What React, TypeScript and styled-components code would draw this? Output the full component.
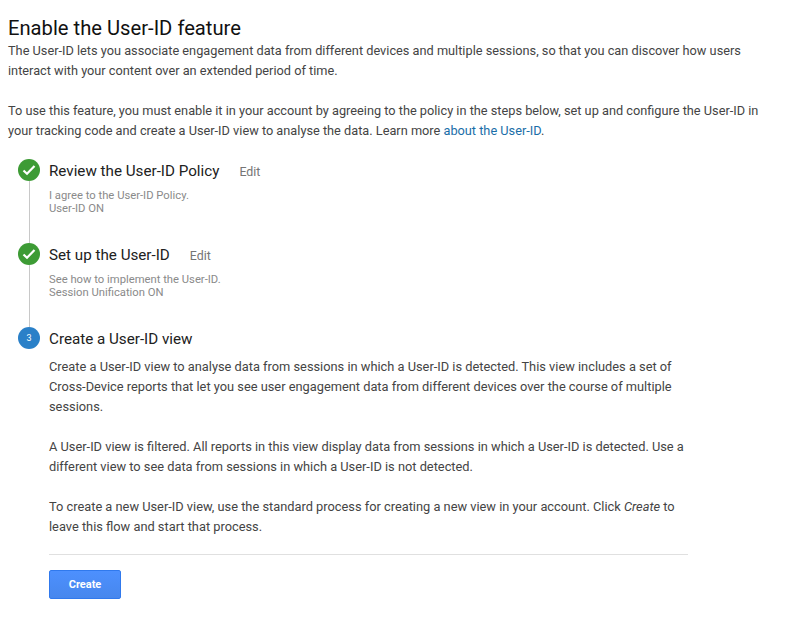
import * as React from "react";
import styled, { createGlobalStyle } from "styled-components";

const GlobalStyle = createGlobalStyle`
  html, body {
    margin: 0;
    padding: 0;
    background: #fff;
    font-family: Roboto, "Liberation Sans", sans-serif;
  }
`;

const Page = styled.div`
  width: 790px;
  height: 629px;
  box-sizing: border-box;
  padding: 15px 8px 0;
  overflow: hidden;
`;

const Title = styled.h1`
  margin: 0;
  font-size: 20.2px;
  line-height: 26px;
  font-weight: 400;
  color: #111;
`;

const Paragraph = styled.p`
  margin: 0 0 20px;
  font-size: 12.76px;
  line-height: 20px;
  color: #444;
`;

const Link = styled.a`
  color: #1a6ea8;
  text-decoration: none;
`;

const Steps = styled.div`
  display: flex;
  flex-direction: column;
  margin-top: -2px;
  padding-left: 10px;
`;

const Step = styled.div<{ $height?: number }>`
  display: flex;
  gap: 9px;
  height: ${(p) => (p.$height ? `${p.$height}px` : "auto")};
`;

const Rail = styled.div`
  display: flex;
  flex-direction: column;
  align-items: center;
  width: 22px;
  flex: none;
`;

const RailLine = styled.div`
  flex: 1;
  width: 1px;
  background: #c8c8c8;
`;

const Badge = styled.div<{ $color: string }>`
  width: 22px;
  height: 22px;
  flex: none;
  border-radius: 50%;
  background: ${(p) => p.$color};
  color: #fff;
  font-size: 9px;
  display: flex;
  align-items: center;
  justify-content: center;
`;

const StepBody = styled.div`
  flex: 1;
  min-width: 0;
`;

const StepHeader = styled.div`
  display: flex;
  align-items: center;
  gap: 20px;
  height: 24px;
`;

const StepTitle = styled.div`
  font-size: 15.2px;
  color: #212121;
`;

const EditLink = styled.span`
  font-size: 12.4px;
  color: #757575;
`;

const Summary = styled.div`
  margin-top: 6px;
  font-size: 11.25px;
  line-height: 13px;
  color: #8a8a8a;
`;

const Description = styled.div`
  width: 639px;
  margin-top: 6px;

  ${Paragraph} {
    font-size: 12.82px;
  }
`;

const Divider = styled.div`
  height: 1px;
  margin-top: -3px;
  background: #e0e0e0;
`;

const CreateButton = styled.button`
  display: block;
  margin-top: 15px;
  width: 72px;
  height: 29px;
  padding: 0;
  border: 1px solid #3079ed;
  border-radius: 2px;
  background: linear-gradient(#4d90fe, #4787ed);
  color: #fff;
  font-family: inherit;
  font-size: 11px;
  font-weight: 700;
`;

const Check = () => (
  <svg width="14" height="12" viewBox="0 0 14 12" fill="none">
    <path d="M1.5 6.5 5 9.8 12.5 2" stroke="#fff" strokeWidth="2.2" />
  </svg>
);

export default function App(): JSX.Element {
  return (
    <Page>
      <GlobalStyle />
      <Title>Enable the User-ID feature</Title>
      <Paragraph>
        The User-ID lets you associate engagement data from different devices and multiple sessions, so that you can
        discover how users interact with your content over an extended period of time.
      </Paragraph>
      <Paragraph>
        To use this feature, you must enable it in your account by agreeing to the policy in the steps below, set up and
        configure the User-ID in your tracking code and create a User-ID view to analyse the data. Learn more{" "}
        <Link href="#">about the User-ID</Link>.
      </Paragraph>
      <Steps>
        <Step $height={84}>
          <Rail>
            <Badge $color="#3d9b35">
              <Check />
            </Badge>
            <RailLine />
          </Rail>
          <StepBody>
            <StepHeader>
              <StepTitle>Review the User-ID Policy</StepTitle>
              <EditLink>Edit</EditLink>
            </StepHeader>
            <Summary>
              I agree to the User-ID Policy.
              <br />
              User-ID ON
            </Summary>
          </StepBody>
        </Step>
        <Step $height={84}>
          <Rail>
            <Badge $color="#3d9b35">
              <Check />
            </Badge>
            <RailLine />
          </Rail>
          <StepBody>
            <StepHeader>
              <StepTitle>Set up the User-ID</StepTitle>
              <EditLink>Edit</EditLink>
            </StepHeader>
            <Summary>
              See how to implement the User-ID.
              <br />
              Session Unification ON
            </Summary>
          </StepBody>
        </Step>
        <Step>
          <Rail>
            <Badge $color="#2a80c8">3</Badge>
          </Rail>
          <StepBody>
            <StepHeader>
              <StepTitle>Create a User-ID view</StepTitle>
            </StepHeader>
            <Description>
              <Paragraph>
                Create a User-ID view to analyse data from sessions in which a User-ID is detected. This view includes a
                set of Cross-Device reports that let you see user engagement data from different devices over the course
                of multiple sessions.
              </Paragraph>
              <Paragraph>
                A User-ID view is filtered. All reports in this view display data from sessions in which a User-ID is
                detected. Use a different view to see data from sessions in which a User-ID is not detected.
              </Paragraph>
              <Paragraph>
                To create a new User-ID view, use the standard process for creating a new view in your account. Click{" "}
                <em>Create</em> to leave this flow and start that process.
              </Paragraph>
              <Divider />
              <CreateButton>Create</CreateButton>
            </Description>
          </StepBody>
        </Step>
      </Steps>
    </Page>
  );
}
